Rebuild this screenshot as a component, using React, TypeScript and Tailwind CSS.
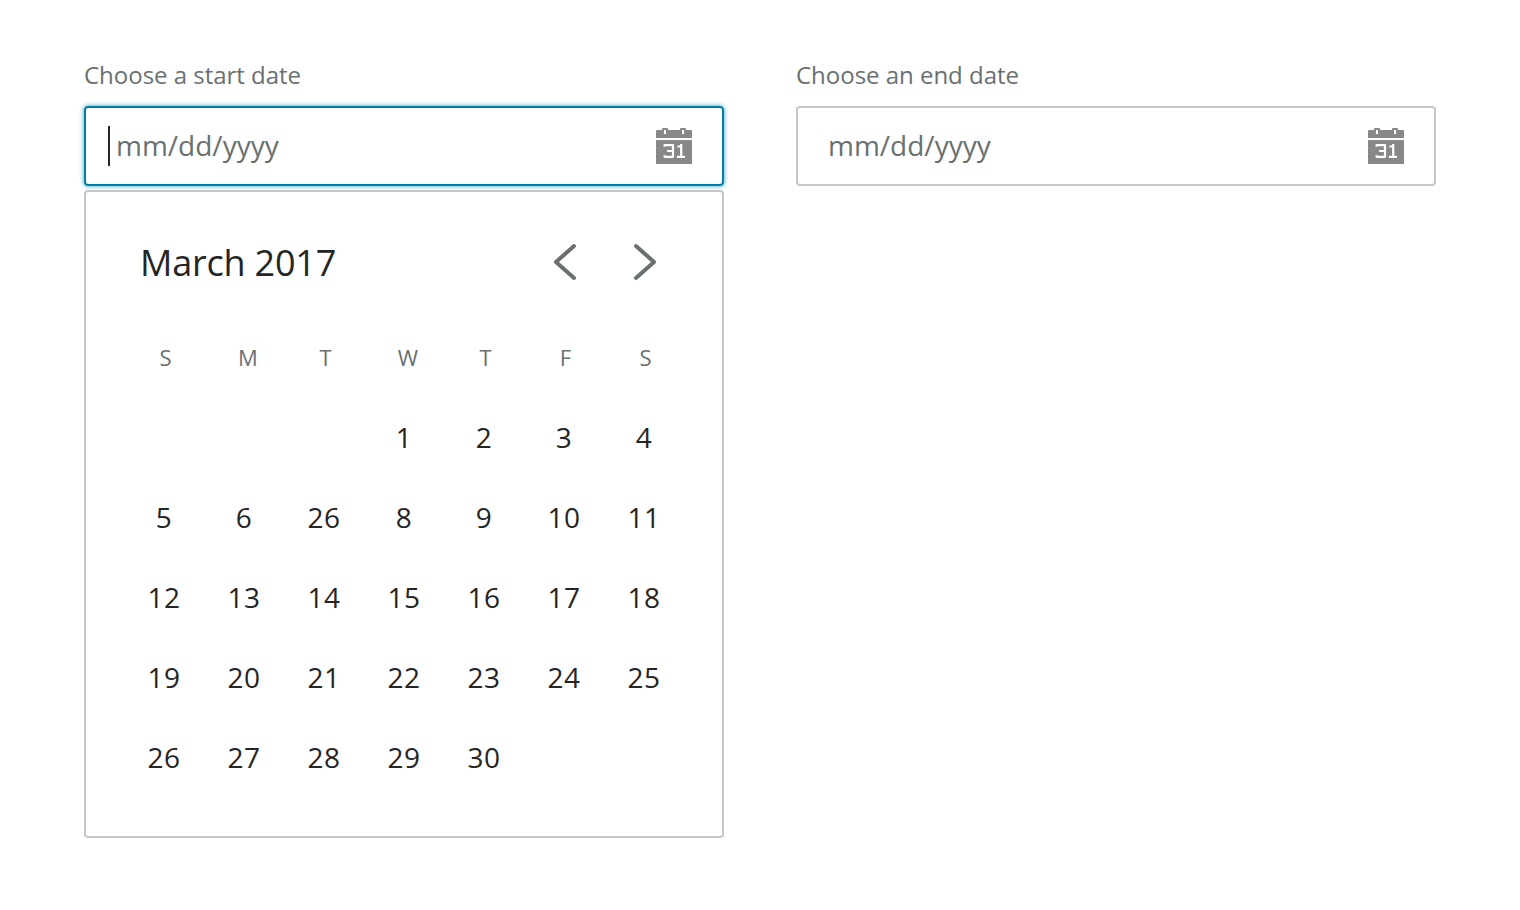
import React from "react";

const WEEKDAYS = ["S", "M", "T", "W", "T", "F", "S"];
const WEEKS = [
  ["", "", "", "1", "2", "3", "4"],
  ["5", "6", "26", "8", "9", "10", "11"],
  ["12", "13", "14", "15", "16", "17", "18"],
  ["19", "20", "21", "22", "23", "24", "25"],
  ["26", "27", "28", "29", "30", "", ""],
];

function CalendarIcon() {
  return (
    <svg width="36" height="36" viewBox="0 0 36 36" className="block">
      <path fill="#888" d="M1 2H6V1Q6 0 7 0H11Q12 0 12 1V2H24V1Q24 0 25 0H29Q30 0 30 1V2H35Q36 2 36 3V10H0V3Q0 2 1 2zM0 12H36V35Q36 36 35 36H1Q0 36 0 35z" />
      <path fill="#fff" d="M8 2h2v4H8zM26 2h2v4h-2z" />
      <path fill="none" stroke="#fff" strokeWidth="2.2" strokeLinejoin="round" d="M8.6 18.8V17.1h8.4v11.8H8.6V27.2M11 23h6M21.5 18.5h3.7V30M21 28.9h8M25.2 16v3" />
    </svg>
  );
}

function DateField({ label, focused = false }: { label: string; focused?: boolean }) {
  return (
    <div className="flex w-[640px] flex-col">
      <label className="h-[46px] text-[24px] leading-[30px] tracking-[-0.02px] whitespace-nowrap text-[#6a7070]">{label}</label>
      <div
        className={
          focused
            ? "flex h-20 items-center justify-between rounded-[4px] border-2 border-[#007fa3] pr-[30px] pl-[22px] shadow-[0_0_5px_#30a0c0]"
            : "flex h-20 items-center justify-between rounded-[4px] border-2 border-[#c7c7c7] pr-[30px] pl-[22px]"
        }
      >
        <div className="flex items-center">
          <span className={focused ? "mr-1.5 h-10 w-0.5 bg-[#252525]" : "mr-1.5 h-10 w-0.5"} />
          <span className="pb-0.5 text-[28px] leading-[38px] text-[#6a7070]">mm/dd/yyyy</span>
        </div>
        <CalendarIcon />
      </div>
    </div>
  );
}

export default function App() {
  return (
    <main className="flex h-[910px] w-[1520px] gap-[72px] bg-white pt-[60px] pl-[84px] font-['Open_Sans',sans-serif]">
      <div className="flex flex-col">
        <DateField label="Choose a start date" focused />
        <section className="mt-1 h-[648px] w-[640px] rounded-[4px] border-2 border-[#c7c7c7] px-[38px] pt-[40px]">
          <header className="flex h-[60px] items-center justify-between pr-[26px] pl-4">
            <h2 className="pt-0.5 text-[36px] leading-[60px] tracking-[-0.2px] text-[#252525]">March 2017</h2>
            <div className="flex gap-[54px]">
              <svg width="26" height="40" viewBox="0 0 26 40" fill="none" stroke="#6a7070" strokeWidth="4" strokeLinecap="round" strokeLinejoin="round">
                <path d="M22 4 4 20 22 36" />
              </svg>
              <svg width="26" height="40" viewBox="0 0 26 40" fill="none" stroke="#6a7070" strokeWidth="4" strokeLinecap="round" strokeLinejoin="round">
                <path d="M4 4 22 20 4 36" />
              </svg>
            </div>
          </header>
          <div className="mt-[25px] grid w-[560px] grid-cols-7 text-center text-[22px] leading-[80px] text-[#6a7070]">
            {WEEKDAYS.map((d, i) => (
              <span key={i} className={d === "M" || d === "W" ? "pl-2" : "pl-[3px]"}>{d}</span>
            ))}
          </div>
          <div className="grid w-[560px] grid-cols-7 text-center text-[28px] tracking-[0.5px] text-[#252525]">
            {WEEKS.flat().map((d, i) => (
              <span key={i} className="h-20 leading-[80px]">{d}</span>
            ))}
          </div>
        </section>
      </div>
      <DateField label="Choose an end date" />
    </main>
  );
}
